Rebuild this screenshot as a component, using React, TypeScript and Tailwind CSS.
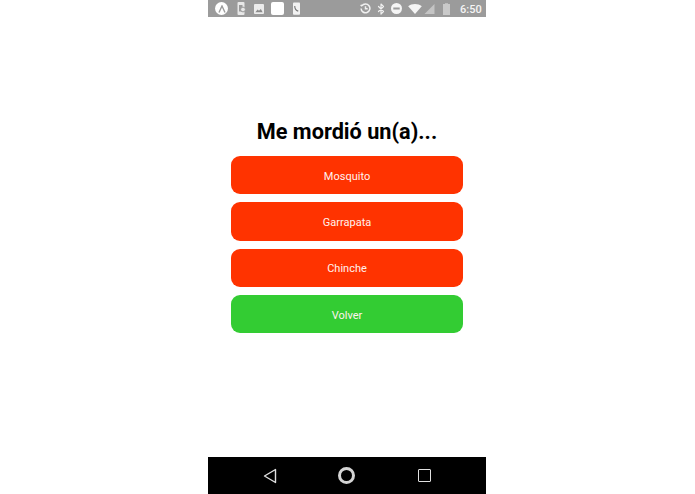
import { Bluetooth } from "lucide-react";

const BUTTONS = [
  { label: "Mosquito", color: "bg-[#ff3300]" },
  { label: "Garrapata", color: "bg-[#ff3300]" },
  { label: "Chinche", color: "bg-[#ff3300]" },
  { label: "Volver", color: "bg-[#33cc33]" },
];

function StatusBar() {
  return (
    <div className="flex h-[17px] items-center bg-[#9b9b9b] pl-[7px] pr-[6px]">
      <div className="flex items-center">
        {/* app notification icons */}
        <div className="flex h-[13px] w-[13px] items-center justify-center rounded-full bg-white">
          <svg width="8" height="8" viewBox="0 0 8 8" fill="none" stroke="#9b9b9b" strokeWidth="1.4">
            <path d="M1 7.5 4 1l3 6.5" />
          </svg>
        </div>
        <svg className="ml-[9px]" width="9" height="13" viewBox="0 0 9 13" fill="none">
          <rect x="0.5" y="0" width="7" height="13" rx="1" fill="#e8e8e8" />
          <rect x="2" y="3" width="3.5" height="6.5" fill="#9b9b9b" />
          <circle cx="6" cy="7.5" r="2.4" fill="#e8e8e8" stroke="#9b9b9b" />
        </svg>
        <svg className="ml-[8px]" width="10" height="10" viewBox="0 0 11 11">
          <rect width="11" height="11" rx="1" fill="#ececec" />
          <path d="M1.5 9 4 6l1.5 1.5L7.5 5.5 9.5 9z" fill="#8a8a8a" />
        </svg>
        <div className="ml-[7px] h-[13px] w-[13px] rounded-[2px] bg-white" />
        <svg className="ml-[9px]" width="7" height="13" viewBox="0 0 8 14">
          <rect width="8" height="14" rx="1" fill="#f2f2f2" />
          <path d="M2 4c0 3 1 5 4 6" fill="none" stroke="#777" strokeWidth="1.3" />
        </svg>
      </div>
      <div className="ml-auto flex items-center">
        <svg width="11" height="11" viewBox="0 0 13 13" fill="none" stroke="#f0f0f0" strokeWidth="1.8">
          <path d="M2.2 3.4A5.2 5.2 0 1 1 1.3 6.5" />
          <path d="M6.5 3.8v2.9h2.6" />
          <path d="M.8 2.2l1.6 1.6" />
        </svg>
        <Bluetooth className="ml-[3.5px] text-[#f0f0f0]" size={12} strokeWidth={2.4} />
        <svg className="ml-[4.5px]" width="11" height="11" viewBox="0 0 12 12">
          <circle cx="6" cy="6" r="6" fill="#f5f5f5" />
          <rect x="2.5" y="4.9" width="7" height="2.2" fill="#9b9b9b" />
        </svg>
        <svg className="ml-[6px]" width="14" height="10" viewBox="0 0 15 11">
          <path d="M0 2.4C4-.8 11-.8 15 2.4L7.5 11z" fill="#f5f5f5" />
        </svg>
        <svg className="ml-[2px]" width="11" height="10" viewBox="0 0 10 10">
          <path d="M10 0v10H0z" fill="#c4c4c4" />
        </svg>
        <svg className="ml-[8px]" width="7" height="12" viewBox="0 0 7 12">
          <rect x="2" width="3" height="1.5" fill="#bdbdbd" />
          <rect y="1" width="7" height="11" fill="#c9c9c9" />
        </svg>
        <span className="ml-[10px] mt-[2px] w-[20px] whitespace-nowrap font-['Roboto',sans-serif] text-[11px] font-medium leading-none text-[#f5f5f5]">
          6:50
        </span>
      </div>
    </div>
  );
}

function NavBar() {
  return (
    <div className="flex h-[37px] items-center bg-black">
      <div className="ml-[55px] flex items-center">
        <svg width="14" height="16" viewBox="0 0 14 16" fill="none" stroke="#e0e0e0" strokeWidth="1.4">
          <path d="M12.5 1.5v13L1.5 8z" strokeLinejoin="round" />
        </svg>
        <div className="ml-[61px] h-[17px] w-[17px] rounded-full border-[3px] border-[#d4d4d4]" />
        <div className="ml-[63px] h-[13px] w-[13px] rounded-[1px] border-[1.5px] border-[#e0e0e0]" />
      </div>
    </div>
  );
}

export default function App() {
  return (
    <div className="h-[494px] w-[695px] bg-white pl-[208px] font-['Roboto',sans-serif]">
      <div className="flex h-full w-[278px] flex-col">
        <StatusBar />
        <div className="flex flex-1 flex-col items-center pt-[99px]">
          <h1 className="text-[21.7px] font-bold leading-[32px] text-black">Me mordió un(a)...</h1>
          <div className="mt-[8px] flex w-[232px] flex-col gap-[8px]">
            {BUTTONS.map((b) => (
              <button
                key={b.label}
                className={`flex h-[38.3px] items-center justify-center rounded-[9px] pt-[4px] text-[11px] text-[#fff2ee] ${b.color}`}
              >
                {b.label}
              </button>
            ))}
          </div>
        </div>
        <NavBar />
      </div>
    </div>
  );
}
